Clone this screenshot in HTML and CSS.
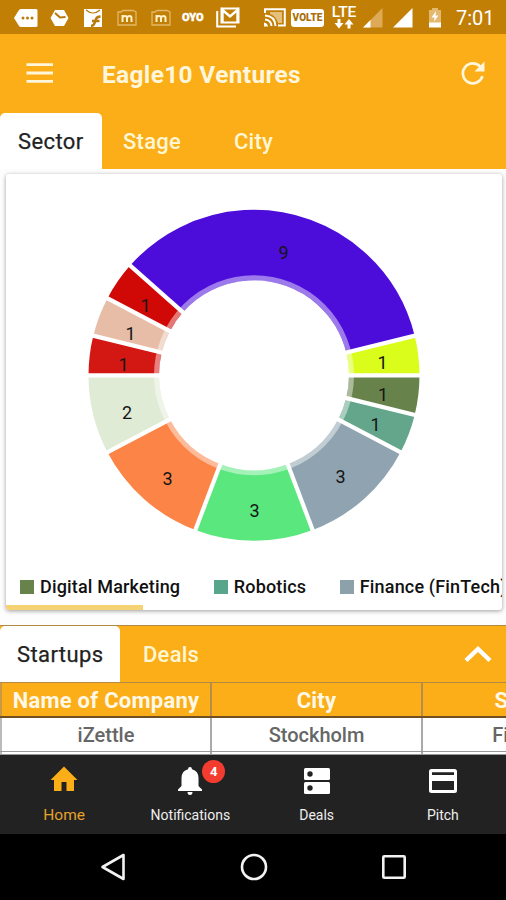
FILE: index.html
```html
<!DOCTYPE html>
<html lang="en">
<head>
<meta charset="utf-8">
<title>Eagle10 Ventures</title>
<link rel="stylesheet" href="styles.css">
</head>
<body>
<div class="screen">
  <div class="status">
    <svg class="s-tag" width="24" height="20" viewBox="0 0 24 20"><path fill="#fff" d="M0 10 5 2Q6 1 7 1H22Q23.500 1 23.500 2.500V17.500Q23.500 19 22 19H7Q6 19 5 18Z"/><g fill="#b87a08"><circle cx="9" cy="10" r="1.500"/><circle cx="13.500" cy="10" r="1.500"/><circle cx="18" cy="10" r="1.500"/></g></svg>
    <svg class="s-clock" width="19" height="18" viewBox="0 0 19 18"><path fill="#fff" d="M5 1H14L18.500 9 14 17H5L.5 9Z"/><path d="M5 4 10 8.500 15.500 8" fill="none" stroke="#b87a08" stroke-width="2"/></svg>
    <svg class="s-flip" width="20" height="20" viewBox="0 0 20 20"><path fill="#fff" d="M1 1H19V19H1Z"/><path d="M3 2Q10 8 17 2" fill="none" stroke="#b87a08" stroke-width="1.200"/><path d="M8 18Q11 18 12 14L13 11Q14 8.500 17.500 8.500M9 13H16.500" fill="none" stroke="#b87a08" stroke-width="2.400"/></svg>
    <svg class="s-m1" width="20" height="18" viewBox="0 0 20 18"><path d="M1 3H4L6 1.500H16L19 3V16H1Z" fill="none" stroke="#e3b868" stroke-width="1.300"/><path d="M5.500 13V6M5.500 9Q6 7 8 7T10 9V13M10 9Q10.500 7 12.500 7T14.500 9V13" fill="none" stroke="#fff0c8" stroke-width="2"/></svg>
    <svg class="s-m2" width="20" height="18" viewBox="0 0 20 18"><path d="M1 3H4L6 1.500H16L19 3V16H1Z" fill="none" stroke="#e3b868" stroke-width="1.300"/><path d="M5.500 13V6M5.500 9Q6 7 8 7T10 9V13M10 9Q10.500 7 12.500 7T14.500 9V13" fill="none" stroke="#fff0c8" stroke-width="2"/></svg>
    <span class="oyo">OYO</span>
    <svg class="s-mail" width="24" height="21" viewBox="0 0 24 21"><path d="M1.200 4V19.500H20" fill="none" stroke="#fff" stroke-width="2"/><path d="M5.500 1.500H22.500V15.500H5.500Z" fill="none" stroke="#fff" stroke-width="2"/><path d="M6.500 15V3L14 9.500 21.500 3V15" fill="none" stroke="#fff" stroke-width="2.400"/></svg>
    <svg class="s-cast" width="22" height="19" viewBox="0 0 22 19"><path d="M1 5V1.200H20.800V17.500H14" fill="none" stroke="#fff" stroke-width="2"/><path d="M6 4H18V15H14Q12 8 6 6Z" fill="#e4c07c"/><path d="M1 7.500Q11 8 11.500 18M1 11.500Q7 12 7.500 18" fill="none" stroke="#fff" stroke-width="2"/><path fill="#fff" d="M0 14.500Q3.500 15 4 18.500H0Z"/></svg>
    <span class="volte">VOLTE</span>
    <span class="lte"><b>LTE</b><svg width="20" height="10" viewBox="0 0 20 10"><path fill="#fff" d="M3.500 0H6.500V4H9.500L5 9.500.5 4H3.500ZM13.500 9.500H16.500V5.500H19.500L15 0 10.500 5.500H13.500Z"/></svg></span>
    <svg class="s-sig1" width="20" height="20" viewBox="0 0 20 20"><path fill="#dfaa57" d="M0 19.500 19.500 0V19.500Z"/><path fill="#fff" d="M0 19.500 7.500 12V19.500Z"/></svg>
    <svg class="s-sig2" width="20" height="20" viewBox="0 0 20 20"><path fill="#fff" d="M0 19.500 19.500 0V19.500Z"/></svg>
    <svg class="s-bat" width="14" height="20" viewBox="0 0 14 20"><path fill="#e2b96f" d="M4 0H10V2H13V15H1V2H4Z"/><path fill="#fff" d="M1 14.500H13V19.500H1ZM8 3 3.500 9.500H6.500L6 13.500 10.500 7.500H7.500Z"/></svg>
    <span class="time">7:01</span>
  </div>

  <header class="appbar">
    <svg class="menu" width="28" height="20" viewBox="0 0 28 20"><path d="M.5 1.700H27M.5 10H27M.5 18.300H27" stroke="#fff6dc" stroke-width="2.800"/></svg>
    <h1>Eagle10 Ventures</h1>
    <svg class="refresh" width="24" height="24" viewBox="0 0 24 24"><path d="M19.500 5.800A10 10 0 1 0 21.500 15.200" fill="none" stroke="#fff6dc" stroke-width="2.700"/><path fill="#fff6dc" d="M23.500.5V10.500H13.500Z"/></svg>
  </header>

  <nav class="tabs">
    <div class="tab active sector">Sector</div>
    <div class="tab stage">Stage</div>
    <div class="tab city">City</div>
  </nav>

  <section class="card">
    <svg class="donut" width="496" height="390" viewBox="6 174 496 390">
      <g transform="translate(254 375.300)">
        <g class="slices" fill="none" stroke-width="70.500">
          <circle r="130.250" pathLength="26" stroke="#68824c" stroke-dasharray="1 25"/>
          <circle r="130.250" pathLength="26" stroke="#63a68b" stroke-dasharray="1 25" transform="rotate(13.846)"/>
          <circle r="130.250" pathLength="26" stroke="#8fa4b0" stroke-dasharray="3 23" transform="rotate(27.692)"/>
          <circle r="130.250" pathLength="26" stroke="#59e77e" stroke-dasharray="3 23" transform="rotate(69.231)"/>
          <circle r="130.250" pathLength="26" stroke="#fd8447" stroke-dasharray="3 23" transform="rotate(110.769)"/>
          <circle r="130.250" pathLength="26" stroke="#e0ebd6" stroke-dasharray="2 24" transform="rotate(152.308)"/>
          <circle r="130.250" pathLength="26" stroke="#d31814" stroke-dasharray="1 25" transform="rotate(180)"/>
          <circle r="130.250" pathLength="26" stroke="#e7bda8" stroke-dasharray="1 25" transform="rotate(193.846)"/>
          <circle r="130.250" pathLength="26" stroke="#d00806" stroke-dasharray="1 25" transform="rotate(207.692)"/>
          <circle r="130.250" pathLength="26" stroke="#4c0dda" stroke-dasharray="9 17" transform="rotate(221.538)"/>
          <circle r="130.250" pathLength="26" stroke="#dbfd1c" stroke-dasharray="1 25" transform="rotate(346.154)"/>
        </g>
        <circle r="97.500" fill="none" stroke="#fff" stroke-opacity=".45" stroke-width="5"/>
        <g stroke="#fff" stroke-width="4.200">
          <path d="M90 0H168"/>
          <path d="M90 0H168" transform="rotate(13.846)"/>
          <path d="M90 0H168" transform="rotate(27.692)"/>
          <path d="M90 0H168" transform="rotate(69.231)"/>
          <path d="M90 0H168" transform="rotate(110.769)"/>
          <path d="M90 0H168" transform="rotate(152.308)"/>
          <path d="M90 0H168" transform="rotate(180)"/>
          <path d="M90 0H168" transform="rotate(193.846)"/>
          <path d="M90 0H168" transform="rotate(207.692)"/>
          <path d="M90 0H168" transform="rotate(221.538)"/>
          <path d="M90 0H168" transform="rotate(346.154)"/>
        </g>
      </g>
      <g class="values">
        <text x="283.500" y="259">9</text>
        <text x="382.500" y="369">1</text>
        <text x="383" y="400.500">1</text>
        <text x="375.500" y="431">1</text>
        <text x="340.500" y="483">3</text>
        <text x="254.500" y="517">3</text>
        <text x="167.500" y="484.500">3</text>
        <text x="127" y="418.500">2</text>
        <text x="123.500" y="371">1</text>
        <text x="130.500" y="340">1</text>
        <text x="145.500" y="312">1</text>
      </g>
    </svg>
    <div class="legend">
      <span class="key"><i class="olive"></i>Digital Marketing</span>
      <span class="key"><i class="teal"></i>Robotics</span>
      <span class="key"><i class="slate"></i>Finance (FinTech)</span>
    </div>
    <div class="scroll"></div>
  </section>

  <nav class="tabs lower">
    <div class="tab active startups">Startups</div>
    <div class="tab deals">Deals</div>
    <svg class="chev" width="28" height="18" viewBox="0 0 28 18"><path d="M2 15.500 14 4 26 15.500" fill="none" stroke="#fff" stroke-width="4.500"/></svg>
  </nav>

  <div class="table">
    <div class="row head"><div>Name of Company</div><div>City</div><div>Sector</div></div>
    <div class="row"><div>iZettle</div><div>Stockholm</div><div>Finance</div></div>
    <div class="row next"><div></div><div></div><div></div></div>
  </div>

  <nav class="bottom">
    <div class="item on">
      <svg width="30" height="30" viewBox="0 0 30 30"><path fill="#fbae17" d="M15 2.500 28.500 16H25V27H17.500V18H12.500V27H5V16H1.500Z"/></svg>
      <span class="b1">Home</span>
    </div>
    <div class="item">
      <svg width="30" height="30" viewBox="0 0 30 30"><path fill="#fff" d="M15 3Q17 3 17 5.200Q23.500 7 23.500 14V22L27 25.500V27H3V25.500L6.500 22V14Q6.500 7 13 5.200Q13 3 15 3ZM12.500 28H17.500Q17.500 31 15 31T12.500 28Z"/></svg>
      <span class="b2">Notifications</span>
      <em class="badge">4</em>
    </div>
    <div class="item">
      <svg width="30" height="30" viewBox="0 0 30 30"><rect x="2" y="4" width="26" height="12" rx="1.500" fill="#fff"/><rect x="2" y="18" width="26" height="12" rx="1.500" fill="#fff"/><circle cx="8" cy="10" r="2.700" fill="#222"/><circle cx="8" cy="24" r="2.700" fill="#222"/></svg>
      <span class="b3">Deals</span>
    </div>
    <div class="item">
      <svg width="30" height="30" viewBox="0 0 30 30"><path fill="#fff" fill-rule="evenodd" d="M3.500 5H26.500Q29 5 29 7.500V26.500Q29 29 26.500 29H3.500Q1 29 1 26.500V7.500Q1 5 3.500 5ZM4 8.200V11H26V8.200ZM4 17V26H26V17Z"/></svg>
      <span class="b4">Pitch</span>
    </div>
  </nav>

  <div class="sysnav">
    <svg width="26" height="28" viewBox="0 0 26 28"><path d="M2.500 14 23.500 2V26Z" fill="none" stroke="#f2f2f2" stroke-width="2.600" stroke-linejoin="round"/></svg>
    <svg width="28" height="28" viewBox="0 0 28 28"><circle cx="14" cy="14" r="12" fill="none" stroke="#f2f2f2" stroke-width="2.600"/></svg>
    <svg width="26" height="26" viewBox="0 0 26 26"><rect x="2.300" y="2.300" width="21.400" height="21.400" rx="1" fill="none" stroke="#f2f2f2" stroke-width="2.600"/></svg>
  </div>
</div>
</body>
</html>
```
FILE: styles.css
```css
* { box-sizing: border-box; }
body { margin: 0; font-family: Roboto, "Liberation Sans", sans-serif; background: #fdfdfd; }
svg { display: block; flex: none; }
.screen { width: 506px; height: 900px; overflow: hidden; display: flex; flex-direction: column; }
.screen > * { flex: none; }

.status { height: 34px; background: #c27f05; display: flex; align-items: center; color: #fff; white-space: nowrap; padding-top: 1px; }
.s-tag { margin-left: 14px; }
.s-clock { margin-left: 12px; }
.s-flip { margin-left: 14px; }
.s-m1 { margin-left: 14px; }
.s-m2 { margin-left: 14px; }
.oyo { width: 25px; margin-left: 11px; font-size: 11px; font-weight: 900; -webkit-text-stroke: 0.4px #fff; }
.s-mail { margin-left: 9px; }
.s-cast { margin-left: 24px; }
.volte { width: 33px; height: 18px; margin-left: 5px; border-radius: 3px; background: #fff; color: #a96f08; font-size: 10px; line-height: 18px; font-weight: 900; text-align: center; }
.lte { width: 26px; margin-left: 7px; display: flex; flex-direction: column; align-items: center; }
.lte b { font-size: 15.5px; line-height: 13px; font-weight: 500; }
.s-sig1 { margin-left: 6px; }
.s-sig2 { margin-left: 10px; }
.s-bat { margin-left: 15px; }
.time { margin-left: 14px; font-size: 20px; }

.appbar { height: 79px; background: #fbae17; display: flex; align-items: center; padding: 2px 21px 0 26px; }
.appbar h1 { margin: 0 0 0 48px; flex: 1; font-size: 24.5px; letter-spacing: 0.32px; font-weight: 700; color: #fff6dc; white-space: nowrap; }
.menu { margin-top: -3px; }
.refresh { margin-top: -4px; }

.tabs { height: 56px; background: #fbae17; display: flex; font-size: 22px; letter-spacing: 0.25px; font-weight: 500; line-height: 58px; color: #fff6d4; white-space: nowrap; }
.active { background: #fff; color: #222; border-radius: 5px 5px 0 0; font-weight: 400; letter-spacing: 0.4px; -webkit-text-stroke: 0.25px #222; }
.sector { width: 102px; padding-left: 18px; }
.stage { width: 111px; padding-left: 21px; }
.city { padding-left: 21px; }

.card { width: 496px; height: 436px; margin: 5px 0 0 6px; background: #fff; border-radius: 3px; box-shadow: 0 1px 4px rgba(0, 0, 0, .38); overflow: hidden; }
.values { font-size: 18px; fill: #151515; text-anchor: middle; }
.legend { height: 41px; display: flex; align-items: center; padding: 4px 0 0 14px; font-size: 18px; letter-spacing: 0.17px; font-weight: 500; color: #111; white-space: nowrap; gap: 33.5px; }
.key { display: flex; align-items: center; flex: none; }
.key i { width: 14px; height: 14px; margin-right: 6px; }
.olive { background: #68824c; }
.teal { background: #57a58a; }
.slate { background: #8da1aa; }
.scroll { width: 137px; height: 5px; background: #f5d375; }

.lower { height: 57px; margin-top: 15px; border-top: 1px solid #b28a45; }
.startups { width: 120px; padding-left: 17px; }
.deals { width: 344px; padding-left: 23px; }
.chev { margin-top: 19px; }

.table { height: 73px; width: 636px; background: #fff; color: #666; font-size: 20px; font-weight: 500; }
.row { display: flex; height: 34px; border-bottom: 1px solid #999; line-height: 34px; text-align: center; }
.row > div { width: 211px; border-right: 2px solid #aaa; flex: none; white-space: nowrap; }
.row > div:first-child { width: 212px; border-left: 2px solid #bbb; }
.head { height: 36px; background: #fbae17; color: #fff8e6; font-size: 22px; letter-spacing: 0.25px; font-weight: 700; line-height: 36px; border-top: 1px solid #b28a45; border-bottom: 2px solid #705020; }
.head > div { border-right-color: #b68d4a; }
.head > div:first-child { border-left-color: #c99a45; }
.next { height: 3px; }

.bottom { height: 79px; background: #222; display: flex; padding-left: 1px; }
.item { flex: 1; position: relative; display: flex; flex-direction: column; align-items: center; color: #eee; font-size: 14px; padding-top: 9px; white-space: nowrap; }
.item svg { overflow: visible; }
.item span { margin-top: 12px; line-height: 18px; }
.on span { color: #e5a12a; font-size: 15.5px; }
.badge { position: absolute; left: 75px; top: 5px; width: 23px; height: 23px; border-radius: 50%; background: #f33c30; color: #fff; font-style: normal; font-size: 13px; font-weight: 700; line-height: 23px; text-align: center; }
.sysnav { height: 66px; background: #000; display: flex; align-items: center; justify-content: space-between; padding: 0 99px 0 100px; }
```
